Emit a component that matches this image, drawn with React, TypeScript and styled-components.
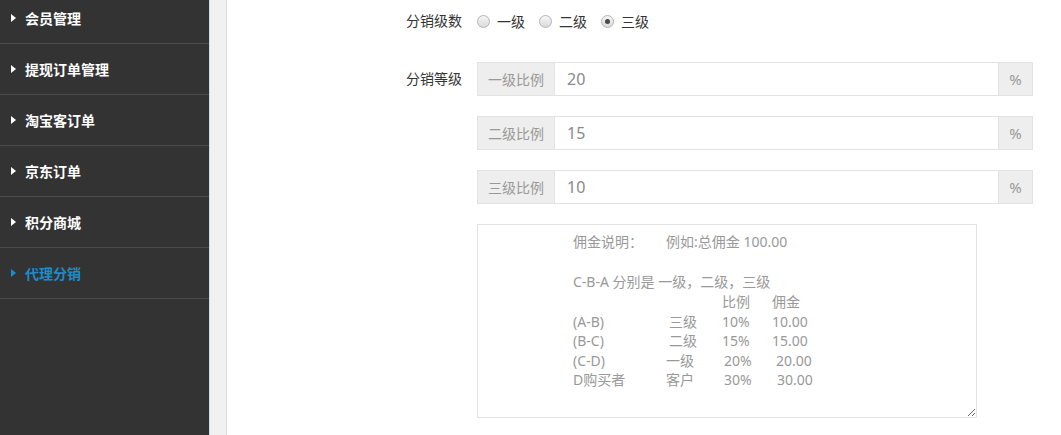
import React from 'react';
import styled, { createGlobalStyle } from 'styled-components';

const GlobalStyle = createGlobalStyle`
  html, body {
    margin: 0;
    padding: 0;
    height: 100%;
    overflow: hidden;
    background: #fff;
  }
  body {
    font-family: "Noto Sans", "Noto Sans CJK SC", sans-serif;
    font-size: 14px;
  }
  #root {
    height: 100%;
  }
`;

const menu = ['会员管理', '提现订单管理', '淘宝客订单', '京东订单', '积分商城', '代理分销'];

const levels = [
  { name: '一级比例', value: '20' },
  { name: '二级比例', value: '15' },
  { name: '三级比例', value: '10' },
];

const rows = [
  ['(A-B)', '三级', '10%', '10.00', 0],
  ['(B-C)', '二级', '15%', '15.00', 0],
  ['(C-D)', '一级', '20%', '20.00', 4],
  ['D购买者', '客户', '30%', '30.00', 5],
] as const;

export default function App() {
  return (
    <>
      <GlobalStyle />
      <Layout>
        <Sidebar>
          <MenuList>
            {menu.map((m) => (
              <MenuItem key={m} $active={m === '代理分销'}>
                <Caret $active={m === '代理分销'} />
                {m}
              </MenuItem>
            ))}
          </MenuList>
        </Sidebar>
        <Gutter />
        <Main>
          <FormRow>
            <Label>分销级数</Label>
            <Radios>
              {['一级', '二级', '三级'].map((r) => (
                <RadioItem key={r}>
                  <Radio $checked={r === '三级'} />
                  {r}
                </RadioItem>
              ))}
            </Radios>
          </FormRow>
          <FormRow $top>
            <Label>分销等级</Label>
            <Groups>
              {levels.map((l) => (
                <InputGroup key={l.name}>
                  <Addon $left>{l.name}</Addon>
                  <Field>{l.value}</Field>
                  <Addon>%</Addon>
                </InputGroup>
              ))}
              <Note>
                <NoteLine>
                  <span>佣金说明：</span>
                  <Example>例如:总佣金 100.00</Example>
                </NoteLine>
                <Blank />
                <NoteLine>C-B-A 分别是 一级，二级，三级</NoteLine>
                <Table>
                  <span />
                  <span />
                  <span>比例</span>
                  <span>佣金</span>
                  {rows.map(([a, b, c, d, shift]) => (
                    <React.Fragment key={a}>
                      <span>{a}</span>
                      <Cell $shift={-Math.min(shift, 3)}>{b}</Cell>
                      <Cell $shift={shift ? 2 : 0}>{c}</Cell>
                      <Cell $shift={shift}>{d}</Cell>
                    </React.Fragment>
                  ))}
                </Table>
              </Note>
            </Groups>
          </FormRow>
        </Main>
      </Layout>
    </>
  );
}

const Layout = styled.div`
  display: flex;
  height: 100%;
`;

const Sidebar = styled.aside`
  width: 210px;
  flex-shrink: 0;
  background: #333333;
  border-right: 1px solid #c9dde2;
  box-sizing: border-box;
  overflow: hidden;
`;

const MenuList = styled.ul`
  list-style: none;
  margin: -7px 0 0;
  padding: 0;
`;

const MenuItem = styled.li<{ $active?: boolean }>`
  display: flex;
  align-items: center;
  height: 50px;
  border-bottom: 1px solid #4b4b4b;
  padding-left: 11px;
  color: ${(p) => (p.$active ? '#1d8cc9' : '#ffffff')};
  font-weight: bold;
  font-size: 14px;
`;

const Caret = styled.i<{ $active?: boolean }>`
  width: 0;
  height: 0;
  border-top: 4.5px solid transparent;
  border-bottom: 4.5px solid transparent;
  border-left: 5px solid ${(p) => (p.$active ? '#1d8cc9' : '#ffffff')};
  margin-right: 9px;
`;

const Gutter = styled.div`
  width: 16px;
  flex-shrink: 0;
  background: #f1f1f1;
  border-right: 1px solid #dcdcdc;
`;

const Main = styled.main`
  flex: 1;
  padding-top: 4px;
  color: #333;
`;

const FormRow = styled.div<{ $top?: boolean }>`
  display: grid;
  grid-template-columns: 235px 1fr;
  column-gap: 15px;
  align-items: ${(p) => (p.$top ? 'start' : 'center')};
  margin-bottom: 24px;
`;

const Label = styled.label`
  text-align: right;
  font-size: 14px;
  color: #333;
  line-height: 34px;
`;

const Radios = styled.div`
  display: flex;
  align-items: center;
  gap: 14px;
  height: 34px;
`;

const RadioItem = styled.span`
  display: inline-flex;
  align-items: center;
  gap: 7px;
  color: #333;
`;

const Radio = styled.span<{ $checked?: boolean }>`
  position: relative;
  width: 11px;
  height: 11px;
  border-radius: 50%;
  border: 1px solid #b4b4b4;
  background: linear-gradient(#f6f6f6, #dadada);
  &::after {
    content: '';
    display: ${(p) => (p.$checked ? 'block' : 'none')};
    position: absolute;
    left: 3px;
    top: 3px;
    width: 5px;
    height: 5px;
    border-radius: 50%;
    background: #4a4a4a;
  }
`;

const Groups = styled.div`
  display: flex;
  flex-direction: column;
  gap: 20px;
  width: 556px;
`;

const InputGroup = styled.div`
  display: flex;
  height: 34px;
  border: 1px solid #e3e3e3;
  box-sizing: border-box;
`;

const Addon = styled.span<{ $left?: boolean }>`
  width: ${(p) => (p.$left ? '76px' : '33px')};
  flex-shrink: 0;
  background: #eeeeee;
  color: #999;
  display: flex;
  align-items: center;
  justify-content: center;
  font-size: ${(p) => (p.$left ? '14px' : '15px')};
  ${(p) => (p.$left ? 'border-right: 1px solid #e3e3e3;' : 'border-left: 1px solid #e3e3e3;')}
`;

const Field = styled.span`
  flex: 1;
  display: flex;
  align-items: center;
  padding-left: 12px;
  color: #8a8a8a;
  font-size: 16px;
`;

const Note = styled.div`
  width: 500px;
  height: 194px;
  box-sizing: border-box;
  border: 1px solid #e3e3e3;
  padding: 7px 0 0 95px;
  color: #999;
  font-size: 14px;
  line-height: 20px;
  resize: both;
  overflow: auto;
`;

const NoteLine = styled.div`
  display: flex;
`;

const Example = styled.span`
  margin-left: 23px;
`;

const Blank = styled.div`
  height: 20px;
`;

const Table = styled.div`
  display: grid;
  grid-template-columns: 96px 53px 50px auto;
  line-height: 19.5px;
`;

const Cell = styled.span<{ $shift: number }>`
  padding-left: ${(p) => Math.max(p.$shift, 0)}px;
  margin-left: ${(p) => Math.min(p.$shift, 0)}px;
`;
